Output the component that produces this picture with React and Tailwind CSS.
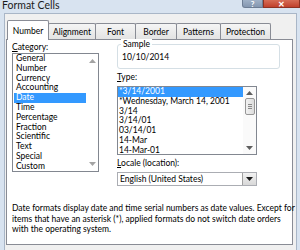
import React from "react";

const font = { fontFamily: 'Lato, "Open Sans", sans-serif' };

function UpArrow({ color = "#a3a3a3" }) {
  return (
    <svg width="7" height="4" viewBox="0 0 7 4">
      <path d="M0 4 L3.5 0 L7 4 Z" fill={color} />
    </svg>
  );
}
function DownArrow({ color = "#a3a3a3" }) {
  return (
    <svg width="7" height="4" viewBox="0 0 7 4">
      <path d="M0 0 L3.5 4 L7 0 Z" fill={color} />
    </svg>
  );
}

const categories = [
  "General",
  "Number",
  "Currency",
  "Accounting",
  "Date",
  "Time",
  "Percentage",
  "Fraction",
  "Scientific",
  "Text",
  "Special",
  "Custom",
];

const types = [
  "*3/14/2001",
  "*Wednesday, March 14, 2001",
  "3/14",
  "3/14/01",
  "03/14/01",
  "14-Mar",
  "14-Mar-01",
];

const tabs = [
  { name: "Alignment", w: "w-[48px]" },
  { name: "Font", w: "w-[41px]" },
  { name: "Border", w: "w-[42px]" },
  { name: "Patterns", w: "w-[45px]" },
  { name: "Protection", w: "w-[51px]" },
];

export default function App() {
  return (
    <div
      className="w-[300px] h-[250px] bg-[#d8e3f0] flex flex-col overflow-hidden text-[8.5px] text-black"
      style={font}
    >
      {/* title bar */}
      <div className="h-[13px] flex justify-between items-start shrink-0">
        <div className="pl-[2px] text-[10.5px] leading-[11px] text-[#1b1b1b]">Format Cells</div>
        <div className="flex">
          <div className="w-[21px] h-[8px] bg-gradient-to-b from-[#9fb0c6] to-[#8597b0] border border-t-0 border-[#6d7d94] rounded-bl-[3px] flex items-center justify-center text-[8px] leading-[8px] text-white font-bold">
            ?
          </div>
          <div className="w-[37px] h-[8px] bg-gradient-to-b from-[#d66c56] to-[#c0402c] border border-t-0 border-[#8e3223] flex items-center justify-center text-[8px] leading-[8px] text-white font-bold">
            ✕
          </div>
        </div>
      </div>

      {/* client */}
      <div className="ml-[4px] mr-[3px] flex-1 bg-[#f0f0f0] border-l border-t border-r border-[#a9b6c7] pt-[6px] pl-[1px] pr-[3px] flex flex-col">
        {/* tabs */}
        <div className="h-[19px] flex items-end pl-[1px] shrink-0">
          <div className="relative z-10 w-[42px] h-[20px] -mb-px bg-white border-l border-t border-r border-[#898c95] rounded-t-[2px] flex items-center justify-center leading-[10px]">
            Number
          </div>
          {tabs.map((t) => (
            <div
              key={t.name}
              className={`${t.w} h-[16px] -ml-px bg-gradient-to-b from-[#f5f5f5] to-[#e3e3e3] border-l border-t border-r border-[#898c95] rounded-t-[2px] flex items-center justify-center leading-[10px]`}
            >
              {t.name}
            </div>
          ))}
        </div>

        {/* panel */}
        <div className="h-[206px] bg-white border border-[#898c95] flex flex-col pl-[5px] shrink-0">
          <div className="flex">
            {/* left column */}
            <div className="flex flex-col pt-[2px]">
              <div className="leading-[11px] h-[11px]">
                <span className="underline">C</span>ategory:
              </div>
              <div className="w-[87px] h-[119px] border border-[#828790] flex">
                <div className="flex-1 flex flex-col pl-px">
                  {categories.map((c) => (
                    <div
                      key={c}
                      className={`h-[9.8px] leading-[9.8px] pl-[2px] whitespace-nowrap ${
                        c === "Date" ? "bg-[#3399ff] text-white" : ""
                      }`}
                    >
                      {c}
                    </div>
                  ))}
                </div>
                <div className="w-[12px] flex flex-col items-center justify-between py-[5px]">
                  <UpArrow />
                  <DownArrow />
                </div>
              </div>
            </div>

            {/* right column */}
            <div className="flex flex-col ml-[18px]">
              <div className="relative mt-[4px] w-[163px] h-[25px] border border-[#d5dfe5] rounded-[3px] pl-[4px] pt-[7px] leading-[11px]">
                <div className="absolute -top-[6px] left-[3px] bg-white px-[2px] leading-[11px]">Sample</div>
                10/10/2014
              </div>
              <div className="mt-[3px] leading-[11px] h-[11px]">
                <span className="underline">T</span>ype:
              </div>
              <div className="mt-[3px] w-[140px] h-[69px] border border-[#828790] flex">
                <div className="flex-1 flex flex-col">
                  {types.map((t, i) => (
                    <div
                      key={t}
                      className={`h-[9.8px] leading-[9.8px] pl-[1px] whitespace-nowrap ${
                        i === 0 ? "bg-[#3399ff] text-white" : ""
                      }`}
                    >
                      {t}
                    </div>
                  ))}
                </div>
                <div className="w-[13px] flex flex-col items-center py-[4px] bg-[#fafafa]">
                  <UpArrow color="#5e5e5e" />
                  <div className="mt-[3px] w-[10px] h-[17px] border border-[#979797] rounded-[2px] bg-gradient-to-r from-[#f2f2f2] to-[#dcdcdc] flex flex-col items-center justify-center gap-[1px]">
                    <div className="w-[4px] h-px bg-[#8a8a8a]" />
                    <div className="w-[4px] h-px bg-[#8a8a8a]" />
                    <div className="w-[4px] h-px bg-[#8a8a8a]" />
                  </div>
                  <div className="flex-1" />
                  <DownArrow color="#5e5e5e" />
                </div>
              </div>
              <div className="mt-[3px] leading-[11px] h-[11px]">
                <span className="underline">L</span>ocale (location):
              </div>
              <div className="mt-[3px] w-[140px] h-[14px] border border-[#abadb3] flex">
                <div className="flex-1 pl-[2px] leading-[12px]">English (United States)</div>
                <div className="w-[14px] h-[12px] border-l border-[#a0a0a0] bg-gradient-to-b from-[#f2f2f2] to-[#d8d8d8] flex items-center justify-center">
                  <DownArrow color="#1a1a1a" />
                </div>
              </div>
            </div>
          </div>

          <div className="mt-[17px] leading-[10.5px] pr-[2px]">
            <div className="whitespace-nowrap">Date formats display date and time serial numbers as date values. Except for</div>
            <div className="whitespace-nowrap">items that have an asterisk (*), applied formats do not switch date orders</div>
            <div className="whitespace-nowrap">with the operating system.</div>
          </div>
        </div>
      </div>
    </div>
  );
}
